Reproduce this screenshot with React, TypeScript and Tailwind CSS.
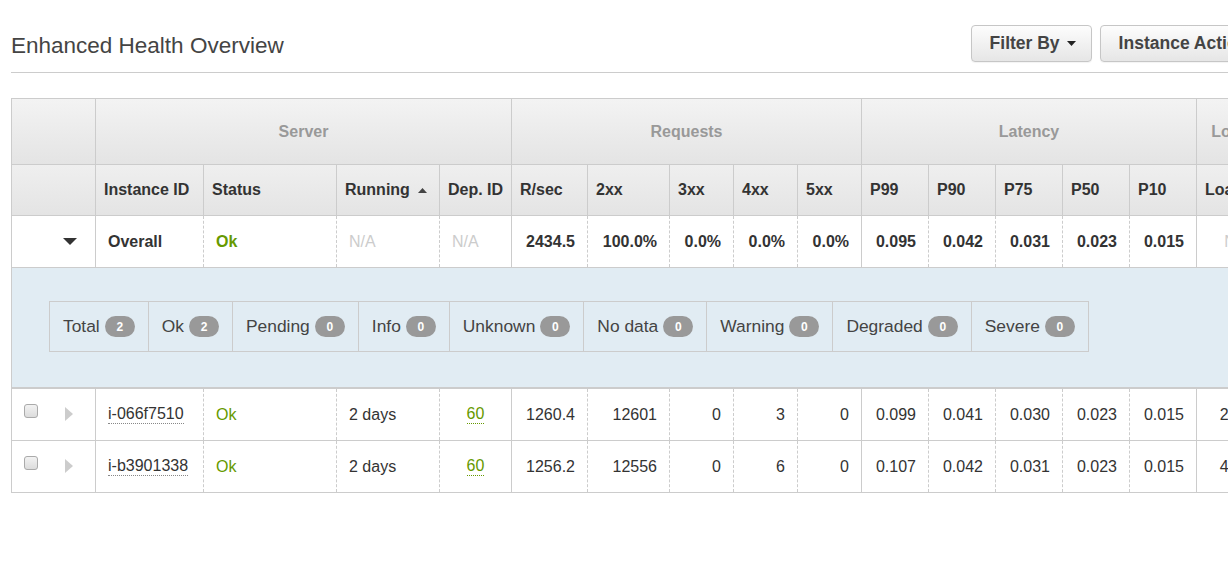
import type { FC, ReactNode } from 'react';

const GRID =
  'grid grid-cols-[84px_108px_133px_103px_72px_76px_82px_64px_64px_64px_67px_67px_67px_67px_67px_67px_67px]';

type Col = { label: string; end: boolean; align: 'left' | 'center' | 'right' };

const cols: Col[] = [
  { label: 'Instance ID', end: false, align: 'left' },
  { label: 'Status', end: false, align: 'left' },
  { label: 'Running', end: false, align: 'left' },
  { label: 'Dep. ID', end: true, align: 'center' },
  { label: 'R/sec', end: false, align: 'right' },
  { label: '2xx', end: false, align: 'right' },
  { label: '3xx', end: false, align: 'right' },
  { label: '4xx', end: false, align: 'right' },
  { label: '5xx', end: true, align: 'right' },
  { label: 'P99', end: false, align: 'right' },
  { label: 'P90', end: false, align: 'right' },
  { label: 'P75', end: false, align: 'right' },
  { label: 'P50', end: false, align: 'right' },
  { label: 'P10', end: true, align: 'right' },
  { label: 'Load 1', end: false, align: 'right' },
  { label: 'Load 5', end: true, align: 'right' },
];

const groups = [
  { label: 'Server', span: 'col-span-4' },
  { label: 'Requests', span: 'col-span-5' },
  { label: 'Latency', span: 'col-span-5' },
  { label: 'Load Average', span: 'col-span-2' },
];

const overall = [
  '2434.5', '100.0%', '0.0%', '0.0%', '0.0%',
  '0.095', '0.042', '0.031', '0.023', '0.015',
];

const instances = [
  {
    id: 'i-066f7510',
    values: ['1260.4', '12601', '0', '3', '0', '0.099', '0.041', '0.030', '0.023', '0.015', '2.16', '2.05'],
  },
  {
    id: 'i-b3901338',
    values: ['1256.2', '12556', '0', '6', '0', '0.107', '0.042', '0.031', '0.023', '0.015', '4.08', '3.94'],
  },
];

const counts = [
  ['Total', 2], ['Ok', 2], ['Pending', 0], ['Info', 0], ['Unknown', 0],
  ['No data', 0], ['Warning', 0], ['Degraded', 0], ['Severe', 0],
] as const;

const Caret: FC<{ dir: 'up' | 'down'; className: string }> = ({ dir, className }) => (
  <svg viewBox="0 0 10 5" className={className} preserveAspectRatio="none">
    {dir === 'down' ? <path d="M0 0H10L5 5Z" fill="currentColor" /> : <path d="M0 5H10L5 0Z" fill="currentColor" />}
  </svg>
);

const Cell: FC<{ end: boolean; align: string; children?: ReactNode }> = ({ end, align, children }) => (
  <div
    className={`flex items-center border-r border-[#ccc] ${end ? '' : 'border-dashed'} ${
      align === 'right' ? 'justify-end pr-3' : align === 'center' ? 'justify-center' : 'pl-3'
    }`}
  >
    {children}
  </div>
);

const Button: FC<{ label: string }> = ({ label }) => (
  <button className="flex h-[37px] items-center gap-[7px] rounded-[4px] border border-[#c6c6c6] bg-gradient-to-b from-[#fdfdfd] to-[#e6e6e6] pr-[15px] pl-[18px] text-[17.5px] font-bold text-[#444] shadow-[0_1px_1px_rgba(0,0,0,0.05)]">
    {label}
    <Caret dir="down" className="h-[5px] w-[9px] text-[#222]" />
  </button>
);

export default function App() {
  return (
    <div className="h-[581px] w-[1228px] overflow-hidden bg-white font-['Liberation_Sans',Arial,sans-serif] text-[16px] text-[#333]">
      <div className="ml-[11px] w-max">
        <div className="flex w-[1279px] items-center justify-between border-b border-[#ccc] pt-[25px] pb-[10px]">
          <h1 className="mt-[4px] text-[22.5px] leading-[26px] text-[#444]">Enhanced Health Overview</h1>
          <div className="flex gap-[8px]">
            <Button label="Filter By" />
            <Button label="Instance Actions" />
          </div>
        </div>

        <div className="mt-[25px] w-max border-t border-l border-[#ccc]">
          {/* group headers */}
          <div className={`${GRID} h-[66px] border-b border-[#ccc] bg-gradient-to-b from-[#f3f3f3] to-[#e4e4e4]`}>
            <div className="border-r border-[#ccc]" />
            {groups.map((g) => (
              <div key={g.label} className={`${g.span} flex items-center justify-center border-r border-[#ccc] font-bold text-[#999]`}>
                {g.label}
              </div>
            ))}
          </div>

          {/* column headers */}
          <div className={`${GRID} h-[51px] border-b border-[#ccc] bg-gradient-to-b from-[#efefef] to-[#e4e4e4]`}>
            <div className="border-r border-[#ccc]" />
            {cols.map((c) => (
              <div key={c.label} className="flex items-center gap-[8px] border-r border-[#ccc] pl-2 font-bold text-[#333]">
                {c.label}
                {c.label === 'Running' && <Caret dir="up" className="h-[5px] w-[9px] text-[#444]" />}
              </div>
            ))}
          </div>

          {/* overall */}
          <div className={`${GRID} h-[52px] border-b border-[#ccc] font-bold`}>
            <div className="flex items-center justify-end border-r border-[#ccc] pr-[18px]">
              <Caret dir="down" className="h-[7px] w-[14px] text-[#333]" />
            </div>
            <Cell end={false} align="left">Overall</Cell>
            <Cell end={false} align="left">
              <span className="text-[#669900]">Ok</span>
            </Cell>
            <Cell end={false} align="left">
              <span className="font-normal text-[#ccc]">N/A</span>
            </Cell>
            <Cell end={true} align="left">
              <span className="font-normal text-[#ccc]">N/A</span>
            </Cell>
            {overall.map((v, i) => (
              <Cell key={i} end={cols[i + 4].end} align="right">
                {v}
              </Cell>
            ))}
            <Cell end={false} align="right">
              <span className="font-normal text-[#ccc]">N/A</span>
            </Cell>
            <Cell end={true} align="right">
              <span className="font-normal text-[#ccc]">N/A</span>
            </Cell>
          </div>

          {/* expanded summary */}
          <div className="h-[121px] border-r border-b-2 border-[#ccc] bg-[#e1ecf3] pt-[33px] pl-[37px]">
            <div className="inline-flex border border-[#ccc]">
              {counts.map(([label, n], i) => (
                <div
                  key={label}
                  className={`flex h-[49px] items-center gap-[5px] px-[13px] text-[17.4px] text-[#444] ${
                    i < counts.length - 1 ? 'border-r border-[#ccc]' : ''
                  }`}
                >
                  {label}
                  <span className="flex h-[21px] min-w-[30px] items-center justify-center rounded-full bg-[#999] px-[10px] text-[12px] font-bold text-white">
                    {n}
                  </span>
                </div>
              ))}
            </div>
          </div>

          {/* instances */}
          {instances.map((inst) => (
            <div key={inst.id} className={`${GRID} h-[52px] border-b border-[#ccc]`}>
              <div className="flex items-start border-r border-[#ccc] pl-3">
                <span className="mt-[15px] h-[14px] w-[14px] rounded-[3px] border border-[#aaa] bg-gradient-to-b from-[#f2f2f2] to-[#dcdcdc]" />
                <svg viewBox="0 0 8 14" className="mt-[18px] ml-[27px] h-[14px] w-[8px] text-[#ccc]">
                  <path d="M0 0L8 7L0 14Z" fill="currentColor" />
                </svg>
              </div>
              <Cell end={false} align="left">
                <span className="border-b border-dotted border-[#888] leading-[18px]">{inst.id}</span>
              </Cell>
              <Cell end={false} align="left">
                <span className="text-[#669900]">Ok</span>
              </Cell>
              <Cell end={false} align="left">2 days</Cell>
              <Cell end={true} align="center">
                <span className="border-b border-dotted border-[#669900] leading-[18px] text-[#669900]">60</span>
              </Cell>
              {inst.values.map((v, i) => (
                <Cell key={i} end={cols[i + 4].end} align="right">
                  {v}
                </Cell>
              ))}
            </div>
          ))}
        </div>
      </div>
    </div>
  );
}
